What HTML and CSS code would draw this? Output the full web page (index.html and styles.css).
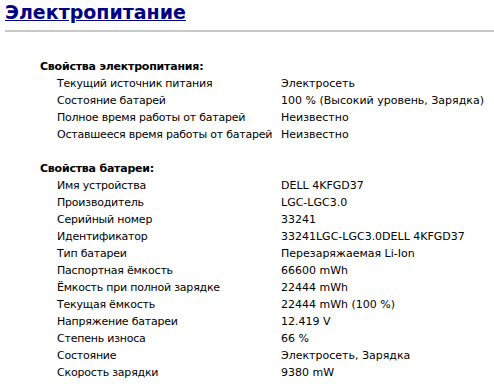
FILE: index.html
```html
<!DOCTYPE html>
<html>
<head>
<meta charset="utf-8">
<link rel="stylesheet" href="styles.css">
</head>
<body>
<header class="head">
  <a class="title" href="#">Электропитание</a>
</header>
<hr class="rule">
<section class="group">
  <div class="group-title">Свойства электропитания:</div>
  <div class="row"><span class="k">Текущий источник питания</span><span class="v">Электросеть</span></div>
  <div class="row"><span class="k">Состояние батарей</span><span class="v">100 % (Высокий уровень, Зарядка)</span></div>
  <div class="row"><span class="k">Полное время работы от батарей</span><span class="v">Неизвестно</span></div>
  <div class="row"><span class="k">Оставшееся время работы от батарей</span><span class="v">Неизвестно</span></div>
</section>
<section class="group">
  <div class="group-title">Свойства батареи:</div>
  <div class="row"><span class="k">Имя устройства</span><span class="v">DELL 4KFGD37</span></div>
  <div class="row"><span class="k">Производитель</span><span class="v">LGC-LGC3.0</span></div>
  <div class="row"><span class="k">Серийный номер</span><span class="v">33241</span></div>
  <div class="row"><span class="k">Идентификатор</span><span class="v">33241LGC-LGC3.0DELL 4KFGD37</span></div>
  <div class="row"><span class="k">Тип батареи</span><span class="v">Перезаряжаемая Li-Ion</span></div>
  <div class="row"><span class="k">Паспортная ёмкость</span><span class="v">66600 mWh</span></div>
  <div class="row"><span class="k">Ёмкость при полной зарядке</span><span class="v">22444 mWh</span></div>
  <div class="row"><span class="k">Текущая ёмкость</span><span class="v">22444 mWh (100 %)</span></div>
  <div class="row"><span class="k">Напряжение батареи</span><span class="v">12.419 V</span></div>
  <div class="row"><span class="k">Степень износа</span><span class="v">66 %</span></div>
  <div class="row"><span class="k">Состояние</span><span class="v">Электросеть, Зарядка</span></div>
  <div class="row"><span class="k">Скорость зарядки</span><span class="v">9380 mW</span></div>
</section>
</body>
</html>
```
FILE: styles.css
```css
html, body { margin: 0; padding: 0; background: #fff; }
body {
  font-family: "DejaVu Sans", Verdana, sans-serif;
  font-size: 11px;
  color: #000;
  padding: 0 0 0 5px;
}
.head { padding-top: 1px; height: 26px; }
.title {
  font-size: 19px;
  font-weight: bold;
  color: #000080;
  text-decoration: underline;
  line-height: 22px;
}
.rule {
  margin: 3px 0 0 0;
  border: 0;
  height: 2px;
  background: #c8c8c8;
}
.group { padding-left: 35px; margin-top: 26px; }
.group + .group { margin-top: 17px; }
.group-title { font-weight: bold; height: 17px; line-height: 17px; letter-spacing: -0.22px; }
.row { display: flex; height: 17px; line-height: 17px; padding-left: 17px; }
.k { width: 224px; flex: none; letter-spacing: -0.22px; }
.v { flex: none; }
```
